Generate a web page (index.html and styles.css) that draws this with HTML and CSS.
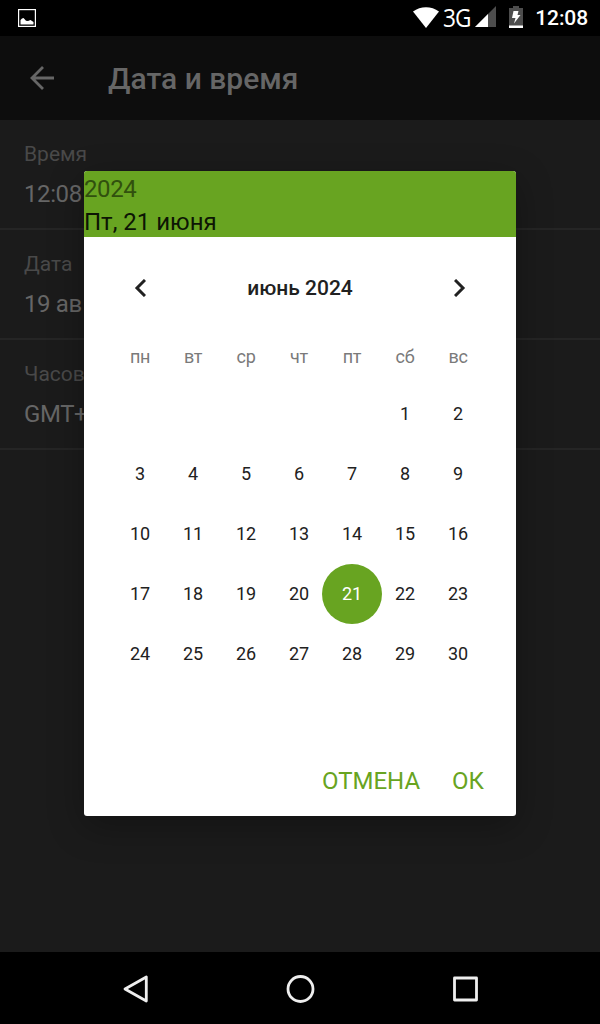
FILE: index.html
```html
<!DOCTYPE html>
<html lang="ru">
<head>
    <meta charset="UTF-8">
    <meta name="viewport" content="width=device-width, initial-scale=1.0">
    <title>Дата и время</title>
    <link rel="stylesheet" href="styles.css">
</head>
<body>
    <div class="status-bar">
        <svg class="status-picture" width="18" height="18" viewBox="0 0 18 18">
            <rect x="0.6" y="0.6" width="16.8" height="16.8" fill="none" stroke="#fff" stroke-width="1.2"/>
            <path d="M2.5 15.5V11L4 9.500L5.500 9L8 11.7L10 12L12.5 11L15.5 13V15.5Z" fill="#fff"/>
        </svg>
        <svg class="status-wifi" width="26" height="22" viewBox="0 0 26 22">
            <path d="M0 4.5C7.5-1.2 18.500-1.2 26 4.500L13 21Z" fill="#fff"/>
        </svg>
        <span class="network">3G</span>
        <svg class="status-signal" width="21" height="21" viewBox="0 0 21 21">
            <path d="M0 21L21 0V21Z" fill="#4d4d4d"/>
            <path d="M0 21L13 8V21Z" fill="#fff"/>
        </svg>
        <svg class="status-battery" width="14" height="22" viewBox="0 0 14 22">
            <path d="M0 2H4V0H10V2H14V22H0Z" fill="#4d4d4d"/>
            <path d="M0 19.500H14V22H0Z" fill="#fff"/>
            <path d="M4.500 5H9.500L8.500 9H11.500L5 17.500L6.500 12H3Z" fill="#fff"/>
        </svg>
        <span class="clock">12:08</span>
    </div>

    <div class="app-bar">
        <svg width="24" height="24" viewBox="0 0 24 24" fill="none" stroke="#666" stroke-width="2.8">
            <path d="M24 12H2.500M13 1L2 12L13 23"/>
        </svg>
        <h1>Дата и время</h1>
    </div>

    <div class="settings">
        <div class="setting">
            <div class="label">Время</div>
            <div class="value">12:08</div>
        </div>
        <div class="setting">
            <div class="label">Дата</div>
            <div class="value">19 ав</div>
        </div>
        <div class="setting">
            <div class="label">Часов</div>
            <div class="value">GMT+</div>
        </div>
    </div>

    <div class="nav-bar">
        <svg width="30" height="30" viewBox="0 0 30 30">
            <path d="M26.300 3V27L5 15Z"/>
        </svg>
        <svg width="30" height="30" viewBox="0 0 30 30">
            <circle cx="15.500" cy="15" r="12.500"/>
        </svg>
        <svg width="30" height="30" viewBox="0 0 30 30">
            <rect x="4.500" y="4" width="22" height="22"/>
        </svg>
    </div>

    <!-- Date picker -->
    <div class="dialog">
        <div class="dialog-header">
            <div class="year">2024</div>
            <div class="date">Пт, 21 июня</div>
        </div>
        <div class="month">
            <svg width="12" height="18" viewBox="0 0 12 18">
                <path d="M11 1L3 9L11 17"/>
            </svg>
            <span>июнь 2024</span>
            <svg width="12" height="18" viewBox="0 0 12 18">
                <path d="M1 1L9 9L1 17"/>
            </svg>
        </div>
        <div class="weekdays">
            <span>пн</span><span>вт</span><span>ср</span><span>чт</span><span>пт</span><span>сб</span><span>вс</span>
        </div>
        <div class="days">
            <span class="first">1</span><span>2</span>
            <span>3</span><span>4</span><span>5</span><span>6</span><span>7</span><span>8</span><span>9</span>
            <span>10</span><span>11</span><span>12</span><span>13</span><span>14</span><span>15</span><span>16</span>
            <span>17</span><span>18</span><span>19</span><span>20</span><span class="selected">21</span><span>22</span><span>23</span>
            <span>24</span><span>25</span><span>26</span><span>27</span><span>28</span><span>29</span><span>30</span>
        </div>
        <div class="actions">
            <button>ОТМЕНА</button>
            <button>ОК</button>
        </div>
    </div>
</body>
</html>
```
FILE: styles.css
```css
body {
    margin: 0;
    height: 1024px;
    display: flex;
    flex-direction: column;
    position: relative;
    overflow: hidden;
    background-color: #1b1b1b;
    font-family: Roboto, sans-serif;
}
.status-bar {
    display: flex;
    height: 36px;
    padding: 0 12px 0 18px;
    align-items: center;
    background-color: #000;
    color: #fff;
}
.status-wifi {
    margin-left: auto;
}
.network {
    width: 28px;
    margin: 0 0 3px 4px;
    font-family: "Open Sans", sans-serif;
    font-size: 26px;
    letter-spacing: -1px;
    transform: scaleX(0.87);
    transform-origin: left;
}
.status-signal {
    margin-left: 4px;
    margin-bottom: 3px;
}
.status-battery {
    margin-left: 13px;
    margin-bottom: 2px;
}
.clock {
    margin-left: 12px;
    font-size: 21px;
    font-weight: 500;
    letter-spacing: -0.1px;
}
.app-bar {
    display: flex;
    height: 84px;
    padding-left: 30px;
    align-items: center;
    background-color: #0d0d0d;
}
h1 {
    margin: 0 0 0 54px;
    color: #666;
    font-size: 30px;
    font-weight: 500;
}
.settings {
    flex: 1;
}
.setting {
    box-sizing: border-box;
    height: 110px;
    padding: 18px 24px 0;
    border-bottom: 2px solid #252525;
}
.label {
    color: #494949;
    font-size: 21px;
    line-height: 32px;
}
.value {
    margin-top: 8px;
    color: #666;
    font-size: 24px;
    line-height: 32px;
    letter-spacing: -0.4px;
}
.nav-bar {
    display: flex;
    box-sizing: border-box;
    height: 72px;
    padding-top: 1px;
    align-items: center;
    justify-content: center;
    gap: 135px;
    background-color: #000;
}
.nav-bar svg {
    fill: none;
    stroke: #eee;
    stroke-width: 2.8;
    stroke-linejoin: round;
}
.dialog {
    position: absolute;
    left: 84px;
    top: 171px;
    width: 432px;
    height: 645px;
    border-radius: 3px;
    overflow: hidden;
    background-color: #fff;
    box-shadow: 0 10px 36px rgba(0, 0, 0, 0.3);
}
.dialog-header {
    height: 66px;
    background-color: #68a421;
    font-size: 24px;
}
.year {
    height: 33px;
    line-height: 36px;
    letter-spacing: -0.4px;
    color: #31500e;
}
.date {
    line-height: 36px;
    color: #0d1504;
}
.month {
    display: flex;
    height: 102px;
    padding: 0 50px;
    align-items: center;
    justify-content: space-between;
    color: #212121;
    font-size: 21px;
    font-weight: 500;
}
.month svg {
    fill: none;
    stroke: #212121;
    stroke-width: 3;
}
.weekdays, .days {
    display: grid;
    grid-template-columns: repeat(7, 53px);
    margin-left: 29.5px;
    text-align: center;
    font-size: 18px;
}
.weekdays {
    height: 45px;
    line-height: 36px;
    letter-spacing: -0.3px;
    color: #7a7a7a;
}
.days {
    grid-auto-rows: 60px;
    line-height: 60px;
    color: #212121;
}
.first {
    grid-column: 6;
}
.selected {
    width: 60px;
    margin-left: -3.5px;
    border-radius: 50%;
    background-color: #68a421;
    color: #fff;
}
.actions {
    display: flex;
    height: 74px;
    margin-top: 60px;
    padding-right: 32px;
    align-items: center;
    justify-content: flex-end;
    gap: 32px;
}
.actions button {
    padding: 0;
    border: 0;
    background: none;
    color: #68a421;
    font-family: inherit;
    font-size: 24px;
}
```
